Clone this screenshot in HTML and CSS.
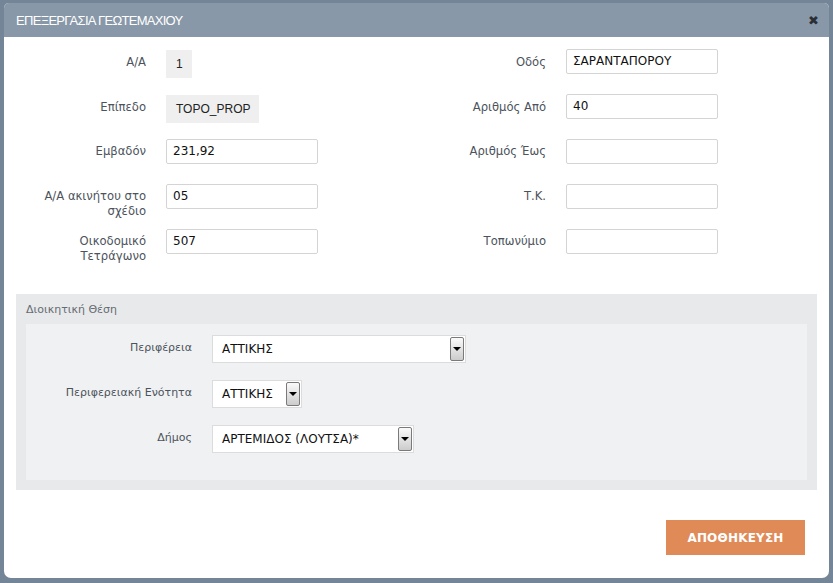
FILE: index.html
```html
<!DOCTYPE html>
<html lang="el">
<head>
<meta charset="utf-8">
<title>Επεξεργασία Γεωτεμαχίου</title>
<link rel="stylesheet" href="styles.css">
</head>
<body>
<div class="dialog">
  <div class="titlebar">
    <span class="title">ΕΠΕΞΕΡΓΑΣΙΑ ΓΕΩΤΕΜΑΧΙΟΥ</span>
    <span class="close">&#10006;</span>
  </div>
  <div class="content">
    <div class="cols">
      <div class="col">
        <div class="row"><div class="label">Α/Α</div><div class="ro">1</div></div>
        <div class="row"><div class="label">Επίπεδο</div><div class="ro">TOPO_PROP</div></div>
        <div class="row"><div class="label">Εμβαδόν</div><div class="input">231,92</div></div>
        <div class="row"><div class="label">Α/Α ακινήτου στο σχέδιο</div><div class="input">05</div></div>
        <div class="row"><div class="label">Οικοδομικό Τετράγωνο</div><div class="input">507</div></div>
      </div>
      <div class="col">
        <div class="row"><div class="label">Οδός</div><div class="input">ΣΑΡΑΝΤΑΠΟΡΟΥ</div></div>
        <div class="row"><div class="label">Αριθμός Από</div><div class="input">40</div></div>
        <div class="row"><div class="label">Αριθμός Έως</div><div class="input"></div></div>
        <div class="row"><div class="label">Τ.Κ.</div><div class="input"></div></div>
        <div class="row"><div class="label">Τοπωνύμιο</div><div class="input"></div></div>
      </div>
    </div>
    <div class="admin">
      <div class="admin-title">Διοικητική Θέση</div>
      <div class="admin-inner">
        <div class="srow"><div class="slabel">Περιφέρεια</div><div class="select sel-wide"><span class="sval">ΑΤΤΙΚΗΣ</span><span class="sbtn"></span></div></div>
        <div class="srow"><div class="slabel">Περιφερειακή Ενότητα</div><div class="select sel-short"><span class="sval">ΑΤΤΙΚΗΣ</span><span class="sbtn"></span></div></div>
        <div class="srow"><div class="slabel">Δήμος</div><div class="select sel-mid"><span class="sval">ΑΡΤΕΜΙΔΟΣ (ΛΟΥΤΣΑ)*</span><span class="sbtn"></span></div></div>
      </div>
    </div>
    <div class="footer">
      <button class="save">ΑΠΟΘΗΚΕΥΣΗ</button>
    </div>
  </div>
</div>
</body>
</html>
```
FILE: styles.css
```css
html, body {
  margin: 0;
  padding: 0;
}
body {
  background: #738597;
  width: 833px;
  height: 583px;
  overflow: hidden;
  font-family: "DejaVu Sans", Verdana, sans-serif;
}
.dialog {
  margin: 3px 0 0 4px;
  width: 825px;
  height: 575px;
  background: #ffffff;
  border-radius: 5px 5px 7px 7px;
  overflow: hidden;
  display: flex;
  flex-direction: column;
}
.titlebar {
  height: 34px;
  background: #8898a8;
  display: flex;
  align-items: center;
  justify-content: space-between;
  padding: 0 10px 0 12px;
  flex-shrink: 0;
}
.title {
  font-family: "Liberation Sans", Arial, sans-serif;
  font-size: 13px;
  letter-spacing: -0.7px;
  color: #ffffff;
  padding-top: 1px;
}
.close {
  font-size: 13px;
  color: #2a2f35;
  font-family: "DejaVu Sans", sans-serif;
}
.content {
  flex: 1;
  display: flex;
  flex-direction: column;
  padding: 12px 12px 0 12px;
}
.cols {
  display: flex;
}
.col {
  width: 400px;
  display: flex;
  flex-direction: column;
}
.row {
  height: 45px;
  display: flex;
  align-items: flex-start;
}
.label {
  width: 130px;
  text-align: right;
  font-size: 11.6px;
  line-height: 15px;
  color: #4c535c;
  padding-top: 5px;
  margin-right: 20px;
  box-sizing: border-box;
}
.row:first-child .label,
.row:nth-child(2) .label {
  padding-top: 6px;
}
.input {
  width: 152px;
  height: 25px;
  box-sizing: border-box;
  border: 1px solid #d4d4d4;
  border-radius: 2px;
  font-size: 12px;
  line-height: 23px;
  padding-left: 6px;
  color: #111;
  background: #fff;
}
.ro {
  height: 28px;
  margin-top: 1px;
  background: #efefef;
  font-family: "Liberation Sans", Arial, sans-serif;
  font-size: 12px;
  line-height: 28px;
  padding: 0 9px 0 10px;
  color: #222;
}
.admin {
  margin-top: 20px;
  background: #e8e9ea;
  padding: 0 10px 10px 10px;
  height: 196px;
  box-sizing: border-box;
  display: flex;
  flex-direction: column;
}
.admin-title {
  font-size: 11px;
  color: #666c73;
  height: 30px;
  line-height: 31px;
}
.admin-inner {
  flex: 1;
  background: #f0f1f2;
  padding-top: 11px;
}
.srow {
  height: 45px;
  display: flex;
  align-items: flex-start;
}
.slabel {
  width: 166px;
  text-align: right;
  font-size: 11px;
  color: #4c535c;
  line-height: 15px;
  padding-top: 5px;
  margin-right: 20px;
}
.select {
  height: 28px;
  box-sizing: border-box;
  background: #fff;
  border: 1px solid #dcdcdc;
  display: flex;
  align-items: center;
  justify-content: space-between;
  padding: 0 1px 0 9px;
  font-size: 12px;
  color: #111;
}
.sel-wide { width: 254px; }
.sel-short { width: 90px; }
.sel-mid { width: 202px; }
.sval {
  white-space: nowrap;
}
.sbtn {
  position: relative;
  width: 14px;
  height: 24px;
  box-sizing: border-box;
  border: 1px solid #7a7a7a;
  border-radius: 2px;
  background: linear-gradient(#fafafa, #cccccc);
  flex-shrink: 0;
}
.sbtn::after {
  content: "";
  position: absolute;
  left: 2px;
  top: 9px;
  border-left: 4px solid transparent;
  border-right: 4px solid transparent;
  border-top: 4px solid #000;
}
.footer {
  flex: 1;
  display: flex;
  justify-content: flex-end;
  align-items: flex-start;
  padding-top: 30px;
  padding-right: 12px;
}
.save {
  width: 139px;
  height: 35px;
  border: none;
  background: #e08a58;
  color: #fff;
  font-family: "DejaVu Sans", Verdana, sans-serif;
  font-weight: bold;
  font-size: 12px;
  letter-spacing: 0.2px;
  padding: 0;
}
```
